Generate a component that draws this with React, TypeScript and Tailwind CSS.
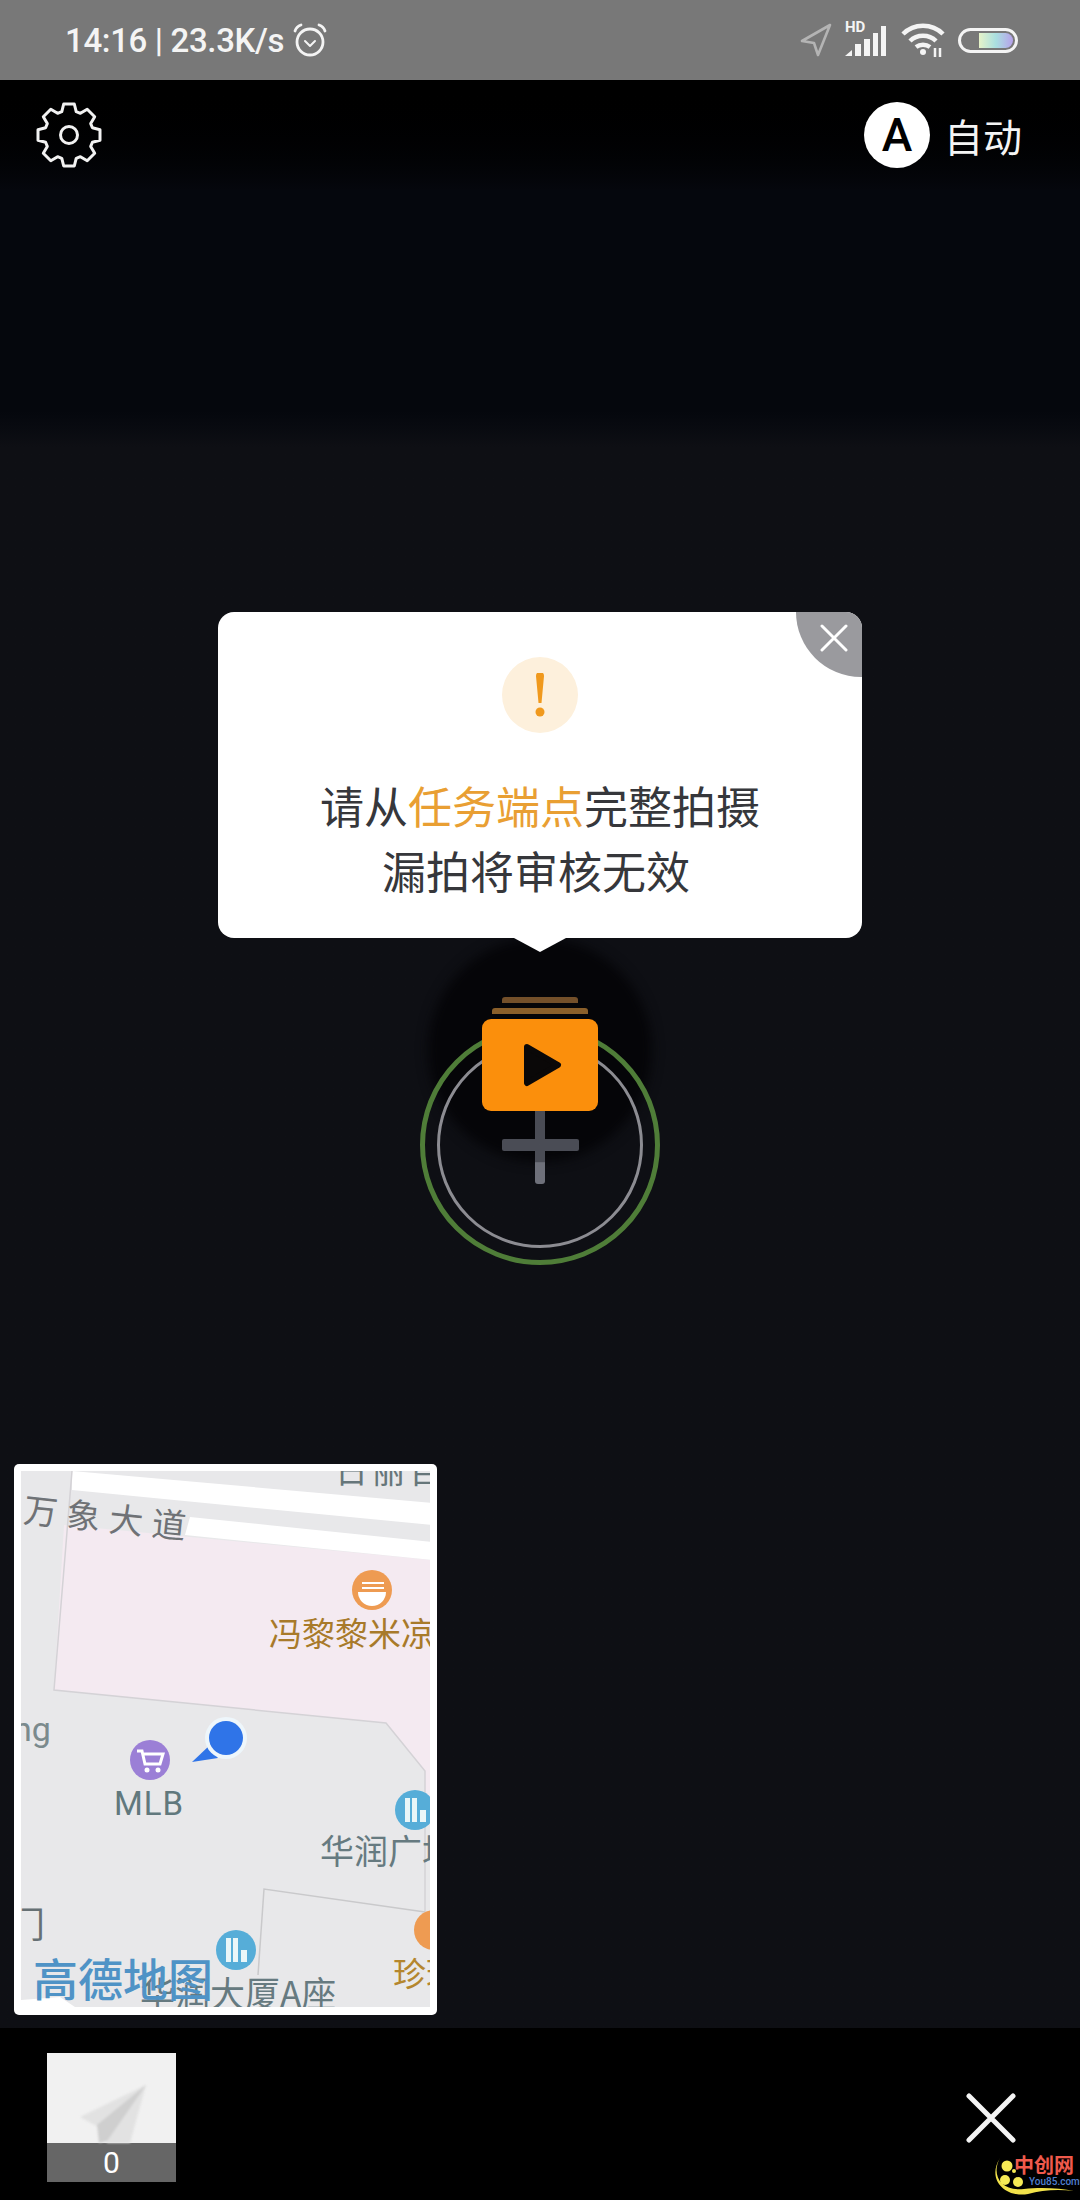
const cjk = "font-['Noto_Sans_CJK_SC','Noto_Sans',sans-serif]"

// eight rounded teeth, one pointing straight up
function gearPath(cx: number, cy: number) {
  const pts: string[] = []
  for (let i = 0; i < 8; i++) {
    const a = (i * Math.PI) / 4 - Math.PI / 2
    const at = (r: number, d: number) => `${(cx + r * Math.cos(a + d)).toFixed(1)} ${(cy + r * Math.sin(a + d)).toFixed(1)}`
    pts.push(at(24.5, -0.3), at(31.5, -0.17), at(31.5, 0.17), at(24.5, 0.3))
  }
  return `M${pts.join('L')}z`
}

function StatusBar() {
  return (
    <div className="flex h-[80px] shrink-0 items-center justify-between bg-[#787878] pl-[65px] pr-[62px] text-[#f4f4f4]">
      <div className="flex items-center gap-[8px]">
        <span className="font-['Roboto',sans-serif] text-[33px] leading-none font-medium tracking-[-0.35px]">14:16 | 23.3K/s</span>
        <svg width="36" height="36" viewBox="0 0 36 36" fill="none" stroke="currentColor" strokeWidth="2.8" strokeLinecap="round" strokeLinejoin="round">
          <circle cx="18" cy="20" r="13" />
          <path d="M13 19l5 5 5-5" strokeWidth="2" />
          <path d="M3 9c1-3 3-5 6-6M33 9c-1-3-3-5-6-6" />
        </svg>
      </div>
      <div className="flex items-center">
        <svg width="32" height="34" viewBox="0 0 32 34" fill="none" stroke="#b4b4b4" strokeWidth="2.6" strokeLinejoin="round">
          <path d="M30 2L2 18l12 2 4 12z" />
        </svg>
        <div className="relative ml-[12px] h-[32px] w-[42px]">
          <span className="absolute left-[1px] top-[-4px] font-['Roboto',sans-serif] text-[15px] leading-none font-bold">HD</span>
          <svg className="absolute left-0 top-0" width="42" height="32" viewBox="0 0 42 32" fill="#f4f4f4">
            <path d="M1 32l7-6v6z" />
            <rect x="11" y="20" width="6" height="12" />
            <rect x="20" y="15" width="6" height="17" />
            <rect x="29" y="9" width="5" height="23" />
            <rect x="37" y="2" width="5" height="30" />
          </svg>
        </div>
        <svg className="ml-[15px]" width="44" height="36" viewBox="0 0 44 36" fill="none" stroke="#f4f4f4" strokeWidth="4.5">
          <path d="M2 12c11-11 29-11 40 0" />
          <path d="M9 19c7-7 19-7 26 0" />
          <path d="M15 25c4-3 10-3 14 0" />
          <circle cx="22" cy="30" r="3" fill="#f4f4f4" stroke="none" />
          <path d="M34 26v9M39 26v9" strokeWidth="2.5" />
        </svg>
        <div className="ml-[13px] flex h-[25px] w-[60px] items-center justify-end rounded-full border-[3px] border-[#f4f4f4] p-[2px]">
          <div className="h-full w-[34px] rounded-l-[6px] rounded-r-full bg-gradient-to-r from-[#e6f3c8] via-[#a9dfe0] to-[#b5a0ea]" />
        </div>
      </div>
    </div>
  )
}

function TopControls() {
  return (
    <div className="flex h-[110px] shrink-0 items-center justify-between bg-gradient-to-b from-black to-[#05070d] pl-[33px] pr-[58px]">
      <svg width="72" height="72" viewBox="0 0 72 72" fill="none" stroke="#f2f2f2" strokeWidth="3" strokeLinejoin="round">
        <path d={gearPath(36, 36)} />
        <circle cx="36" cy="36" r="8.5" />
      </svg>
      <div className="flex items-center gap-[14px]">
        <div className="flex h-[66px] w-[66px] items-center justify-center rounded-full bg-white font-['Roboto',sans-serif] text-[46px] leading-none font-medium text-black">A</div>
        <span className={`${cjk} text-[39px] leading-none text-[#f4f4f4]`}>自动</span>
      </div>
    </div>
  )
}

function Popup() {
  return (
    <div className="absolute left-[218px] top-[422px] h-[326px] w-[644px] rounded-[16px] bg-white">
      <div className="absolute right-0 top-0 h-[65px] w-[66px] overflow-hidden rounded-tr-[16px]">
        <div className="flex h-full w-full items-start justify-end rounded-bl-[66px] bg-[#9a9a9e] pr-[14px] pt-[12px]">
          <svg width="28" height="28" viewBox="0 0 28 28" stroke="#fff" strokeWidth="3" strokeLinecap="round">
            <path d="M2 2l24 24M26 2L2 26" />
          </svg>
        </div>
      </div>
      <div className="mx-auto mt-[45px] flex h-[76px] w-[76px] items-center justify-center rounded-full bg-[#fdf0dc]">
        <svg width="12" height="44" viewBox="0 0 12 44" fill="#f0991d">
          <path d="M2 3a4 4 0 018 0l-2.5 27h-3z" />
          <circle cx="6" cy="39" r="4.5" />
        </svg>
      </div>
      <div className={`${cjk} mt-[40px] text-center text-[44px] leading-[65px] text-[#36373b]`}>
        <div>请从<span className="text-[#e99f33]">任务端点</span>完整拍摄</div>
        <div className="pr-[8px]">漏拍将审核无效</div>
      </div>
      <div className="absolute left-[296px] top-full h-0 w-0 border-x-[26px] border-t-[14px] border-x-transparent border-t-white" />
    </div>
  )
}

function ShutterArea() {
  return (
    <>
      <div className="absolute left-[428px] top-[748px] h-[224px] w-[224px] rounded-full bg-[#050508] blur-[6px]" />
      {/* rings with the plus in the middle */}
      <div className="absolute left-[420px] top-[835px] flex h-[240px] w-[240px] items-center justify-center rounded-full border-[5px] border-[#4f7d38]">
        <div className="flex h-[206px] w-[206px] items-center justify-center rounded-full border-[3px] border-[#8c8c92]">
          <div className="relative flex h-[12px] w-[77px] items-center justify-center rounded-[2px] bg-[#4a4c55]">
            <div className="absolute top-[-34px] h-[79px] w-[10px] rounded-b-[3px] bg-gradient-to-b from-[#4a4c55] from-[72%] to-[#6e707a] to-[73%]" />
          </div>
        </div>
      </div>
      {/* task card stack */}
      <div className="absolute left-[482px] top-[807px] flex w-[116px] flex-col items-center">
        <div className="h-[6px] w-[76px] rounded-t-[3px] bg-[#74502a]" />
        <div className="mt-[5px] h-[6px] w-[96px] rounded-t-[3px] bg-[#8a5f2a]" />
        <div className="mt-[5px] flex h-[92px] w-[116px] items-center justify-center rounded-[9px] bg-[#fb8f0c]">
          <svg className="ml-[6px]" width="40" height="46" viewBox="0 0 40 46" fill="#0a0808" stroke="#0a0808" strokeWidth="6" strokeLinejoin="round">
            <path d="M4 5l31 18L4 41z" />
          </svg>
        </div>
      </div>
    </>
  )
}

function MapIcon({ cx, cy, color, children }: { cx: number; cy: number; color: string; children: React.ReactNode }) {
  return (
    <g transform={`translate(${cx} ${cy})`}>
      <circle r="20" fill={color} />
      {children}
    </g>
  )
}

const Building = (
  <g fill="#e9f6f8">
    <rect x="-10" y="-12" width="5" height="24" />
    <rect x="-3" y="-12" width="5" height="24" />
    <rect x="5" y="0" width="6" height="12" />
  </g>
)

function MapPreview() {
  return (
    <div className="ml-[14px] mb-[13px] h-[551px] w-[423px] rounded-[5px] bg-white p-[7px]">
      <div className={`${cjk} relative h-[536px] w-[409px] overflow-hidden bg-[#e8e8ea]`}>
        <svg className="absolute inset-0" width="409" height="536" viewBox="21 1471 409 536">
          <path d="M64 1525L432 1560V1790L425 1771 386 1723 54 1690z" fill="#f4eaf1" />
          <path d="M425 1771V1800H432V1771z" fill="#f4eaf1" />
          <path d="M72 1471L432 1503V1525L72 1490z" fill="#fff" />
          <path d="M190 1517L432 1542V1560L185 1535z" fill="#fff" />
          <path d="M72 1471L54 1690 386 1723 425 1771V1912" fill="none" stroke="#d4d2d6" strokeWidth="1.5" />
          <path d="M258 1975L264 1889 425 1912" fill="none" stroke="#c9c9cb" strokeWidth="1.5" />
          <path d="M21 2007V2000L60 1997 75 2007z" fill="#fff" />

          <MapIcon cx={372} cy={1590} color="#ee9b52">
            <path d="M-14 2h28a14 14 0 01-28 0z" fill="#fff" />
            <path d="M-10-7H12M-10-2H12" stroke="#fff" strokeWidth="2" />
          </MapIcon>
          <MapIcon cx={150} cy={1760} color="#9b7fd6">
            <path d="M-13-9h5l3 13h15l3-10H-6" fill="none" stroke="#fff" strokeWidth="3" />
            <circle cx="-3" cy="10" r="2.5" fill="#fff" />
            <circle cx="8" cy="10" r="2.5" fill="#fff" />
          </MapIcon>
          <MapIcon cx={415} cy={1810} color="#56add8">{Building}</MapIcon>
          <MapIcon cx={236} cy={1950} color="#56add8">{Building}</MapIcon>
          <circle cx="434" cy="1930" r="20" fill="#ee9b52" />

          <path d="M192 1762L210 1745 218 1758z" fill="#2f74e8" />
          <circle cx="226" cy="1738" r="21" fill="#eef6fb" />
          <circle cx="226" cy="1738" r="17" fill="#2f74e8" />
        </svg>

        <span className="absolute left-[3px] top-[20px] rotate-[6deg] origin-left whitespace-nowrap text-[34px] leading-none tracking-[9px] text-[#6f7276]">万象大道</span>
        <span className="absolute left-[314px] top-[-18px] whitespace-nowrap text-[33px] leading-none tracking-[4px] text-[#66767a]">日丽百</span>
        <span className="absolute left-[248px] top-[145px] whitespace-nowrap text-[33px] leading-none text-[#a87a2a]">冯黎黎米凉</span>
        <span className="absolute left-[-8px] top-[241px] font-['Roboto',sans-serif] text-[34px] leading-none text-[#7b8a8d]">ng</span>
        <span className="absolute left-[93px] top-[316px] font-['Roboto',sans-serif] text-[33px] leading-none tracking-[1px] text-[#61787d]">MLB</span>
        <span className="absolute left-[299px] top-[362px] whitespace-nowrap text-[34px] leading-none text-[#667a80]">华润广场</span>
        <span className="absolute left-[-12px] top-[433px] text-[36px] leading-none text-[#667074]">门</span>
        <span className="absolute left-[372px] top-[485px] whitespace-nowrap text-[33px] leading-none text-[#b4862e]">珍珠</span>
        <span className="absolute left-[119px] top-[503px] whitespace-nowrap text-[35px] leading-none text-[#667a80]">华润大厦A座</span>
        <span className="absolute left-[12px] top-[484px] whitespace-nowrap text-[45px] leading-none font-medium text-[#4f93c6]">高德地图</span>
      </div>
    </div>
  )
}

function BottomBar() {
  return (
    <div className="relative flex h-[172px] shrink-0 items-start justify-between bg-black pl-[47px] pr-[64px] pt-[25px]">
      <div className="flex h-[129px] w-[129px] flex-col bg-[#f1f1f1]">
        <div className="relative h-[90px]">
          <svg className="absolute inset-0 blur-[1px]" width="129" height="90" viewBox="0 0 129 90">
            <path d="M99 32L33 64 55 76 60 90 83 90z" fill="#e2e2e2" />
            <path d="M99 32L50 72 52 90 60 88z" fill="#cfcfcf" />
          </svg>
        </div>
        <div className="flex h-[39px] items-center justify-center bg-[#666] font-['Roboto',sans-serif] text-[30px] leading-none text-white">0</div>
      </div>
      <svg className="mt-[40px]" width="50" height="50" viewBox="0 0 50 50" stroke="#f4f4f4" strokeWidth="5" strokeLinecap="round">
        <path d="M3 3l44 44M47 3L3 47" />
      </svg>

      {/* site watermark */}
      <div className="absolute bottom-[2px] right-[4px] h-[42px] w-[82px]">
        <svg className="absolute inset-0" width="82" height="42" viewBox="0 0 82 42">
          <path d="M6 2C-3 18 6 36 30 33c16-2 36-1 50 2-16-2-32-1-46 3C12 42-8 24 6 2z" fill="#f2e24a" />
          <circle cx="13" cy="10" r="5.5" fill="#f6ea55" />
          <circle cx="11" cy="24" r="5" fill="#f6ea55" />
          <circle cx="24" cy="26" r="5" fill="#f6ea55" />
          <circle cx="20" cy="15" r="2" fill="#f6ea55" />
        </svg>
        <span className={`${cjk} absolute left-[20px] top-[-4px] whitespace-nowrap text-[20px] leading-[26px] font-bold text-[#ef5a4c]`}>中创网</span>
        <span className="absolute left-[35px] top-[21px] whitespace-nowrap font-['Roboto',sans-serif] text-[10px] leading-none font-medium text-[#4f7fd0]">You85.com</span>
      </div>
    </div>
  )
}

export default function App() {
  return (
    <div className="flex h-[2200px] w-[1080px] flex-col overflow-hidden bg-black">
      <StatusBar />
      <TopControls />
      <main className="relative flex flex-1 flex-col justify-end bg-gradient-to-b from-[#05070d] from-[12%] to-[#0e0f14] to-[14%]">
        <MapPreview />
        <ShutterArea />
        <Popup />
      </main>
      <BottomBar />
    </div>
  )
}
